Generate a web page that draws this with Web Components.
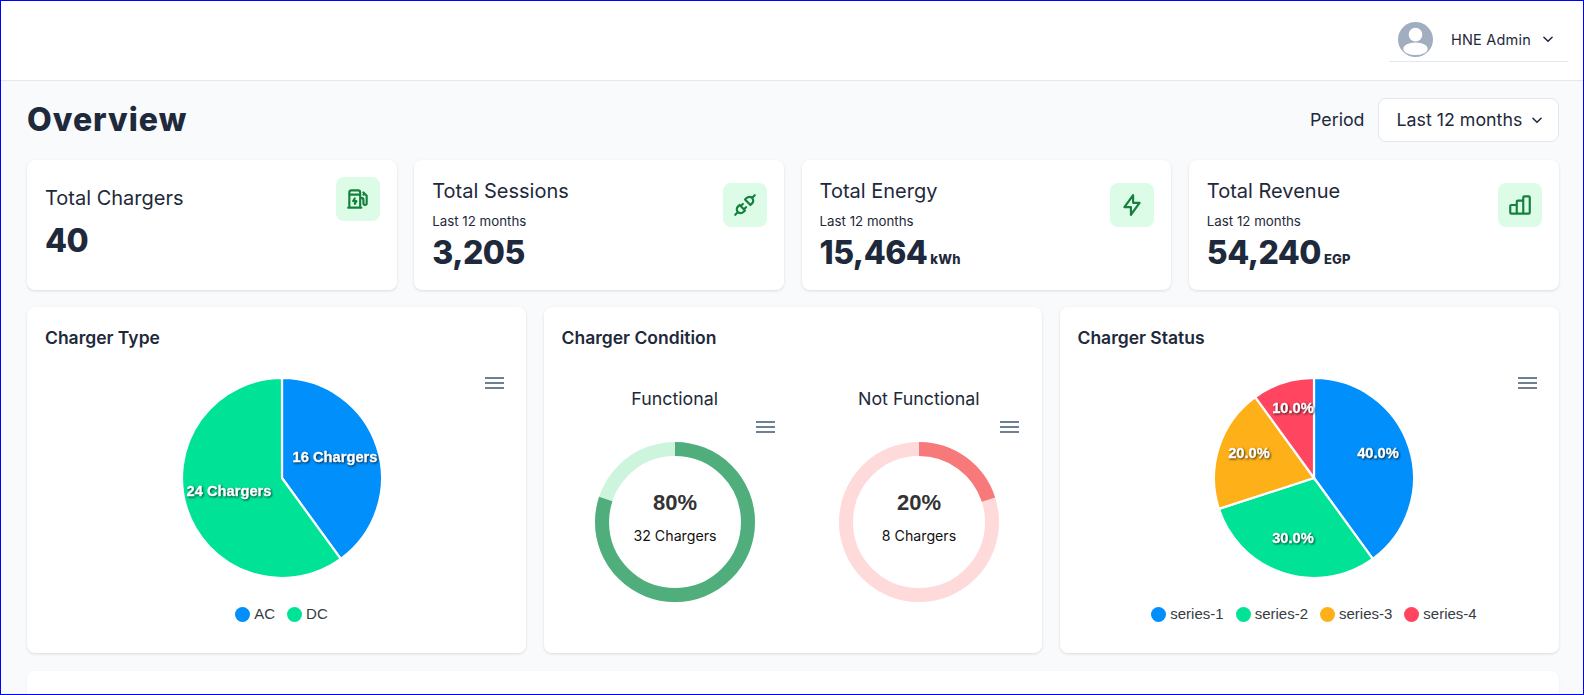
<!DOCTYPE html>
<html><head><meta charset="utf-8"><title>Overview</title>
<style>html,body{margin:0;padding:0;height:695px;overflow:hidden;background:#f8fafc}</style>
</head><body>
<x-app>
  <x-topbar></x-topbar>
  <x-page-head></x-page-head>
  <x-stats>
    <x-stat label="Total Chargers" value="40" icon="pile"></x-stat>
    <x-stat label="Total Sessions" sub="Last 12 months" value="3,205" icon="plug"></x-stat>
    <x-stat label="Total Energy" sub="Last 12 months" value="15,464" unit="kWh" icon="bolt"></x-stat>
    <x-stat label="Total Revenue" sub="Last 12 months" value="54,240" unit="EGP" icon="bars"></x-stat>
  </x-stats>
  <x-charts>
    <x-card heading="Charger Type"><x-pie id="type"></x-pie></x-card>
    <x-card heading="Charger Condition">
      <x-conditions>
        <x-donut label="Functional" pct="80" note="32 Chargers" main="#4fae7b" track="#cdf5de"></x-donut>
        <x-donut label="Not Functional" pct="20" note="8 Chargers" main="#f87979" track="#fedada"></x-donut>
      </x-conditions>
    </x-card>
    <x-card heading="Charger Status"><x-pie id="status"></x-pie></x-card>
  </x-charts>
  <x-card class="tail"></x-card>
</x-app>
<script>
const FONT_UI = '"Inter","Liberation Sans",sans-serif';
const ICONS = {
  pile:'<path d="M18 7l-1 1M14 11h1a2 2 0 0 1 2 2v3a1.5 1.5 0 0 0 3 0v-7l-3 -3M4 20v-14a2 2 0 0 1 2 -2h6a2 2 0 0 1 2 2v14M9 11.5l-1.5 2.5h3l-1.5 2.5M3 20h12M4 8h10"/>',
  plug:'<path d="M7 12l5 5l-1.5 1.5a3.536 3.536 0 1 1 -5 -5l1.5 -1.5zM17 12l-5 -5l1.5 -1.5a3.536 3.536 0 1 1 5 5l-1.5 1.5zM3 21l2.5 -2.5M18.5 5.5l2.5 -2.5M10 11l-2 2M13 14l-2 2"/>',
  bolt:'<path d="M13 3v7h6l-8 11v-7h-6l8 -11"/>',
  bars:'<path d="M3 13a1 1 0 0 1 1 -1h4a1 1 0 0 1 1 1v7h-5a1 1 0 0 1 -1 -1zM9 9a1 1 0 0 1 1 -1h4a1 1 0 0 1 1 1v11h-6zM15 5a1 1 0 0 1 1 -1h4a1 1 0 0 1 1 1v14a1 1 0 0 1 -1 1h-5z"/>'
};
const CHEVRON = '<svg width="14" height="14" viewBox="0 0 24 24" fill="none" stroke="currentColor" stroke-width="2.6" stroke-linecap="round" stroke-linejoin="round"><path d="M5 9l7 7l7 -7"/></svg>';
function define(name, render){
  customElements.define(name, class extends HTMLElement{
    constructor(){super();this.attachShadow({mode:'open'});}
    connectedCallback(){this.shadowRoot.innerHTML = render(this);}
  });
}
define('x-app',()=>`<style>:host{display:block;box-sizing:border-box;height:695px;border:1px solid #0000ff;overflow:hidden;background:#f8fafc;color:#1e293b;font-family:${FONT_UI}}
.main{display:flex;flex-direction:column;gap:17px;padding:0 24.5px 0 26px}</style>
<slot name="top"></slot><div class="main"><slot></slot></div>`);
define('x-topbar',h=>{h.slot='top';return `<style>:host{display:flex;justify-content:flex-end;height:79px;background:#fff;border-bottom:1px solid #e2e8f0;padding-right:15px}
.user{display:flex;align-items:center;box-sizing:border-box;width:179px;height:61px;padding:16px 13px 0 9px;border-bottom:1px solid #e2e8f0;font-size:14.5px;letter-spacing:.2px;color:#1e293b}
.av{width:35px;height:35px;margin-right:18px;flex:none}.n{flex:1}</style>
<div class="user"><svg class="av" viewBox="0 0 36 36"><defs><clipPath id="a"><circle cx="18" cy="18" r="18"/></clipPath></defs><circle cx="18" cy="18" r="18" fill="#a0aec0"/><circle cx="18" cy="13" r="7" fill="#fff"/><ellipse cx="18" cy="27.5" rx="12.5" ry="6.5" fill="#fff" clip-path="url(#a)"/></svg><span class="n">HNE Admin</span><span style="display:flex">${CHEVRON}</span></div>`});
define('x-page-head',()=>`<style>:host{display:flex;align-items:center;justify-content:space-between;height:44px;margin-top:17px;margin-bottom:1px}
h1{margin:0;font:800 32px/44px "Inter","Liberation Sans",sans-serif;color:#1e293b;letter-spacing:1px}
.r{display:flex;align-items:center;gap:13px;font-size:17.8px}
.b{display:flex;align-items:center;gap:8px;box-sizing:border-box;height:44px;width:181px;padding:0 12px 2px 18px;background:#fff;border:1px solid #e2e8f0;border-radius:8px;white-space:nowrap}
.p{padding-bottom:2px}</style>
<h1>Overview</h1><div class="r"><span class="p">Period</span><div class="b"><span>Last 12 months</span><span style="display:flex;padding-top:2px">${CHEVRON}</span></div></div>`);
define('x-stats',()=>`<style>:host{display:grid;grid-template-columns:repeat(4,1fr);gap:17.6px;height:130px}</style><slot></slot>`);
define('x-stat',h=>{const a=n=>h.getAttribute(n);return `<style>:host{display:block;box-sizing:border-box;background:#fff;border-radius:8px;box-shadow:0 1px 3px rgba(0,0,0,.12);padding:17px 17px 0 18px}
.h{display:flex;align-items:center;justify-content:space-between}
.l{font-size:20px;line-height:28px;color:#1e293b;font-weight:400}
.l.only{padding-bottom:2px}
.s{font-size:13.3px;line-height:16px;margin:8px 0 4px;color:#1e293b}
.t{flex:none;width:44px;height:44px;border-radius:8px;background:#dcfce7;display:flex;align-items:center;justify-content:center;color:#15803d}
.v{margin-top:2px;font-size:32px;line-height:36px;font-weight:800;color:#1e293b;display:flex;align-items:baseline;gap:3px;letter-spacing:-.5px}
.u{font-size:13px;font-weight:800;line-height:16px;letter-spacing:.2px}</style>
<div class="h"><div><div class="l${a('sub')?'':' only'}">${a('label')}</div>${a('sub')?`<div class="s">${a('sub')}</div>`:''}</div>
<div class="t"><svg width="26" height="26" viewBox="0 0 24 24" fill="none" stroke="currentColor" stroke-width="2" stroke-linecap="round" stroke-linejoin="round">${ICONS[a('icon')]}</svg></div></div>
<div class="v"><span>${a('value')}</span>${a('unit')?`<span class="u">${a('unit')}</span>`:''}</div>`});
define('x-charts',()=>`<style>:host{display:grid;grid-template-columns:repeat(3,1fr);gap:17.6px;height:346px}</style><slot></slot>`);
define('x-card',h=>{const t=h.getAttribute('heading');return `<style>:host{display:block;box-sizing:border-box;background:#fff;border-radius:8px;box-shadow:0 1px 3px rgba(0,0,0,.12);padding:19px 18px 18px}
:host(.tail){height:240px;margin-top:1px;box-shadow:0 1px 3px rgba(0,0,0,.06)}
h2{margin:0;font-size:17.5px;line-height:24px;font-weight:600;color:#1e293b}</style>${t?`<h2>${t}</h2>`:''}<slot></slot>`});
customElements.define('x-menu',class extends HTMLElement{constructor(){super();this.attachShadow({mode:'open'}).innerHTML=`<style>:host{position:absolute;display:block;width:19px;height:8px;top:var(--t);right:var(--r);border-top:2px solid #6e8192;border-bottom:2px solid #6e8192}
i{display:block;height:2px;margin-top:3px;background:#6e8192}</style><i></i>`;}});
const PIES={type:{cx:227,data:[[40,'#008ffb'],[60,'#00e396']],labels:[['16 Chargers',280,87],['24 Chargers',174,121]],legend:['AC','DC']},
 status:{cx:226,data:[[40,'#008ffb'],[30,'#00e396'],[20,'#feb019'],[10,'#ff4560']],labels:[['40.0%',290,83],['30.0%',205,168],['20.0%',161,83],['10.0%',205,38]],legend:['series-1','series-2','series-3','series-4']}};
define('x-pie',h=>{const p=PIES[h.id],cx=p.cx,cy=108,r=100;let a=0,s='';
 for(const [v,c] of p.data){const b=a+v*3.6,pt=t=>[(cx+r*Math.sin(t*Math.PI/180)).toFixed(2),(cy-r*Math.cos(t*Math.PI/180)).toFixed(2)];const [x1,y1]=pt(a),[x2,y2]=pt(b);
  s+=`<path d="M${cx} ${cy}L${x1} ${y1}A${r} ${r} 0 ${v>50?1:0} 1 ${x2} ${y2}Z" fill="${c}" stroke="#fff" stroke-width="2.2"/>`;a=b;}
 const lbl=p.labels.map(([t,x,y])=>`<text x="${x}" y="${y}" text-anchor="middle" dominant-baseline="central">${t}</text>`).join('');
 const leg=p.legend.map((t,i)=>`<span class="li"><i style="background:${p.data[i][1]}"></i>${t}</span>`).join('');
 return `<style>:host{display:block;position:relative;margin-top:20px;padding-left:10px;--t:7px;--r:4px}
svg{display:block}text{font:700 14.7px "Liberation Sans",Arial,sans-serif;fill:#fff;stroke:#fff;stroke-width:.3px;filter:drop-shadow(1px 1px 1px rgba(0,0,0,.7))}
.lg{display:flex;justify-content:center;gap:12px;margin-top:20px;font:15px/16px "Liberation Sans",Arial,sans-serif;color:#373d3f}
.li{display:flex;align-items:center;gap:4px}.li i{width:15px;height:15px;border-radius:50%}</style>
<x-menu></x-menu><svg width="453" height="216" viewBox="0 0 453 216">${s}${lbl}</svg><div class="lg">${leg}</div>`});
define('x-conditions',()=>`<style>:host{display:grid;grid-template-columns:1fr 1fr;margin:36px -17px 0 -9px}</style><slot></slot>`);
define('x-donut',h=>{const a=n=>h.getAttribute(n),p=+a('pct'),r=73,C=2*Math.PI*r,cx=122,cy=90;
 return `<style>:host{display:block;position:relative;--t:35px;--r:22px}
.t{text-align:center;font-size:17.8px;line-height:24px;padding-top:1px;color:#1e293b}svg{display:block;margin-top:21px}
.p{font:700 22px "Liberation Sans",sans-serif;fill:#333}.n{font:14.2px "Inter","Liberation Sans",sans-serif;fill:#111}</style>
<div class="t">${a('label')}</div><x-menu></x-menu>
<svg width="244" height="180" viewBox="0 0 244 180"><circle cx="${cx}" cy="${cy}" r="${r}" fill="none" stroke="${a('track')}" stroke-width="14"/>
<circle cx="${cx}" cy="${cy}" r="${r}" fill="none" stroke="${a('main')}" stroke-width="14" stroke-dasharray="${C*p/100} ${C}" transform="rotate(-90 ${cx} ${cy})"/>
<text class="p" x="${cx}" y="${cy-20}" text-anchor="middle" dominant-baseline="central">${p}%</text>
<text class="n" x="${cx}" y="${cy+13}" text-anchor="middle" dominant-baseline="central">${a('note')}</text></svg>`});
</script>
</body></html>
